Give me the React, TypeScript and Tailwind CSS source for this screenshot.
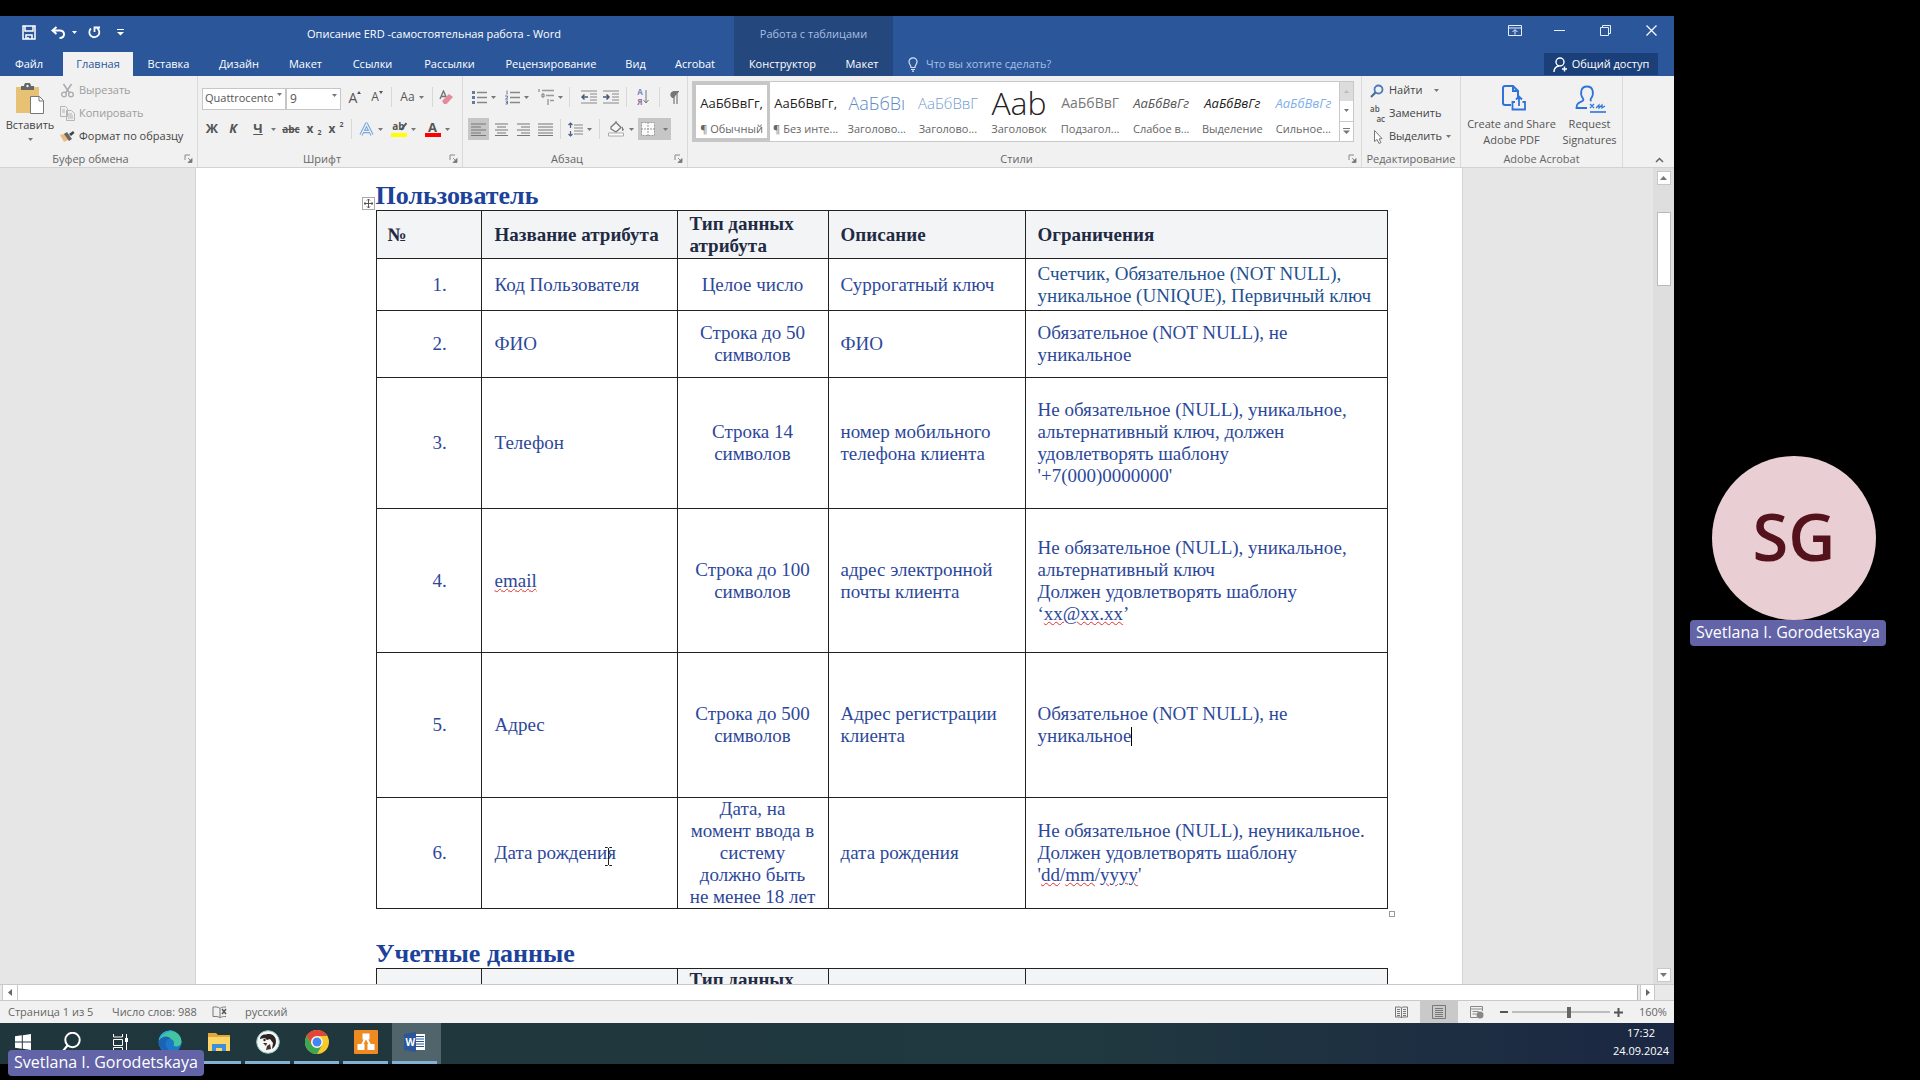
import React from "react";
import type { ReactNode } from "react";

type P = { children?: ReactNode };

function Svg({ w, h, box, className, children }: P & { w: number; h: number; box?: string; className?: string }) {
  return (
    <svg width={w} height={h} viewBox={box ?? `0 0 ${w} ${h}`} fill="none" className={"shrink-0 " + (className ?? "")} aria-hidden="true">
      {children}
    </svg>
  );
}

const Arrow = ({ className }: { className?: string }) => (
  <Svg w={5} h={3} className={className}>
    <path d="M0 0h5L2.500 3z" fill="#777" />
  </Svg>
);

const Launcher = () => (
  <Svg w={9} h={9}>
    <path d="M1 6V1h5" stroke="#888" />
    <path d="M4 4l3 3M8 4.500v4H4z" stroke="#777" fill="#777" strokeWidth=".8" />
  </Svg>
);

const Sep = () => <span className="mx-1 h-5 w-px shrink-0 bg-[#d8d8d8]" />;

function Tool({ label, className, children }: P & { label: string; className: string }) {
  return (
    <button type="button" aria-label={label} className={"flex h-[22px] shrink-0 items-center justify-center gap-1 text-[#555] " + className}>
      {children}
    </button>
  );
}

function Group({ title, className, launcher, children }: P & { title: string; className: string; launcher?: boolean }) {
  return (
    <section aria-label={title} className={"relative flex flex-col border-r border-[#dadada] " + className}>
      <div className="min-h-0 flex-1">{children}</div>
      <div className={"flex h-4 items-center justify-center text-[11px] whitespace-nowrap text-[#666]" + (launcher ? " pr-4" : "")}>{title}</div>
      {launcher && (
        <button type="button" aria-label={title + ": параметры"} className="absolute right-1 bottom-1">
          <Launcher />
        </button>
      )}
    </section>
  );
}

const tabs = [
  { t: "Файл", w: "w-[58px] mr-[5px]" },
  { t: "Главная", w: "w-[70px]" },
  { t: "Вставка", w: "w-[71px]" },
  { t: "Дизайн", w: "w-[70px]" },
  { t: "Макет", w: "w-[63px]" },
  { t: "Ссылки", w: "w-[71px]" },
  { t: "Рассылки", w: "w-[83px]" },
  { t: "Рецензирование", w: "w-[120px]" },
  { t: "Вид", w: "w-[49px]" },
  { t: "Acrobat", w: "w-[70px]" },
];

function TitleBar() {
  return (
    <header className="flex h-[60px] shrink-0 bg-[#2b579a] text-white">
      <div className="flex w-[734px] shrink-0 flex-col">
        <div className="flex h-9 items-center">
          <div className="flex w-[130px] shrink-0 items-center pb-1 pl-[22px]">
            <button type="button" aria-label="Сохранить">
              <Svg w={14} h={15}>
                <path d="M1 1h12v13H1zM3 1v5h8V1M4 14v-4h6v4M6 14v-2" stroke="#fff" strokeWidth="1.500" />
              </Svg>
            </button>
            <button type="button" aria-label="Отменить" className="ml-[15px] flex items-center gap-[7px]">
              <Svg w={14} h={13}>
                <path d="M5.500 1L1.500 4.500l4 3.500M2 4.500h6.500c6 0 6 7.500 0 7.500" stroke="#fff" strokeWidth="2" />
              </Svg>
              <Svg w={5} h={3}><path d="M0 0h5L2.500 3z" fill="#fff" /></Svg>
            </button>
            <button type="button" aria-label="Повторить" className="ml-[10px]">
              <Svg w={14} h={13}>
                <path d="M4 2.500A5 5 0 1 0 10 2M7.500 6V1.500H13" stroke="#fff" strokeWidth="1.800" />
              </Svg>
            </button>
            <button type="button" aria-label="Настройка панели" className="ml-4">
              <Svg w={7} h={7}><path d="M0 .5h7" stroke="#fff" /><path d="M0 3h7L3.500 6.500z" fill="#fff" /></Svg>
            </button>
          </div>
          <h1 className="flex-1 pl-1 text-center text-[11px] whitespace-nowrap">Описание ERD -самостоятельная работа - Word</h1>
        </div>
        <nav className="flex h-6 text-[11px]">
          {tabs.map((x, i) => (
            <button key={x.t} type="button" className={"shrink-0 text-center " + x.w + (i === 1 ? " bg-[#f1f1f1] text-[#2b579a]" : "")}>
              {x.t}
            </button>
          ))}
        </nav>
      </div>
      <div className="flex w-[159px] shrink-0 flex-col bg-[#24477e] text-[11px]">
        <div className="flex h-9 items-center justify-center text-[#a9bfe0]">Работа с таблицами</div>
        <div className="flex h-6">
          <button type="button" className="w-[97px] text-center">Конструктор</button>
          <button type="button" className="flex-1 text-center">Макет</button>
        </div>
      </div>
      <div className="flex flex-1 flex-col">
        <div className="flex h-9 items-center justify-end pr-[17px] pb-2">
          <button type="button" aria-label="Параметры ленты" className="w-[46px]">
            <Svg w={14} h={11}><path d="M.5.500h13v10H.5zM.5 3h13M7 9.500V5M4.500 7L7 4.500 9.500 7" stroke="#e6eefb" /></Svg>
          </button>
          <button type="button" aria-label="Свернуть" className="w-[46px]"><Svg w={11} h={11}><path d="M0 5.500h11" stroke="#e6eefb" /></Svg></button>
          <button type="button" aria-label="Восстановить" className="w-[46px]">
            <Svg w={11} h={11}><path d="M.5 2.500h8v8h-8zM2.500 2.500v-2h8v8h-2" stroke="#e6eefb" /></Svg>
          </button>
          <button type="button" aria-label="Закрыть"><Svg w={11} h={11}><path d="M.5.500l10 10M10.500.500l-10 10" stroke="#fff" strokeWidth="1.200" /></Svg></button>
        </div>
        <div className="flex h-6 items-center justify-between pr-4 pl-[15px] text-[11px]">
          <label className="flex items-center gap-2">
            <Svg w={10} h={15}><path d="M3 10.500C3 8 1 7.500 1 4.800a4 4 0 0 1 8 0C9 7.500 7 8 7 10.500zM3 12.500h4M4 14.200h2" stroke="#d5e2f5" strokeWidth="1.200" /></Svg>
            <input aria-label="Помощник" placeholder="Что вы хотите сделать?" className="w-40 bg-transparent placeholder:text-[#a9c0e4] outline-none" />
          </label>
          <button type="button" className="flex h-[22px] w-[114px] items-center justify-center gap-1 bg-[#1b3f78] whitespace-nowrap">
            <Svg w={15} h={15}>
              <circle cx="7" cy="5" r="4" stroke="#fff" strokeWidth="1.400" />
              <path d="M1 15c0-4 2-5.500 5-6M9 12h5M11.500 9.500v5" stroke="#fff" strokeWidth="1.400" />
            </Svg>
            Общий доступ
          </button>
        </div>
      </div>
    </header>
  );
}

function Clipboard() {
  return (
    <Group title="Буфер обмена" className="w-[198px] shrink-0" launcher>
      <div className="flex">
        <button type="button" className="flex w-[60px] shrink-0 flex-col items-center pt-[7px] text-[11px] text-[#444]">
          <Svg w={30} h={32}>
            <rect x="1" y="4" width="23" height="26" fill="#e8c274" />
            <path d="M6 7V3h3a3.500 3.500 0 0 1 7 0h3v4z" fill="#666" />
            <circle cx="12.500" cy="3" r="1.200" fill="#f1f1f1" />
            <path d="M15.500 13.500h9l4 4v13h-13z" fill="#fff" stroke="#777" />
            <path d="M24 13.500v4.500h4.500" stroke="#777" />
          </Svg>
          <span className="leading-5">Вставить</span>
          <Arrow className="mt-[3px]" />
        </button>
        <div className="flex flex-col pt-[3px] text-[11px] whitespace-nowrap">
          <button type="button" className="flex h-[23px] items-center gap-1 text-[#9d9d9d]">
            <Svg w={15} h={15}>
              <path d="M3.500 1l6 9M11.500 1l-6 9" stroke="#aaa" strokeWidth="1.500" />
              <circle cx="4" cy="11.500" r="2.300" stroke="#aaa" strokeWidth="1.300" />
              <circle cx="11" cy="11.500" r="2.300" stroke="#aaa" strokeWidth="1.300" />
            </Svg>
            Вырезать
          </button>
          <button type="button" className="flex h-[23px] items-center gap-1 text-[#9d9d9d]">
            <Svg w={15} h={15}>
              <path d="M.5.500h5l2 2v8h-7zM6.500 4.500h5l3 3v7h-8z" stroke="#b5b5b5" fill="#eee" />
              <path d="M2 4h3M2 6h3M8 8h4M8 10h5M8 12h5" stroke="#b5b5b5" />
            </Svg>
            Копировать
          </button>
          <button type="button" className="flex h-[23px] items-center gap-1 text-[#444]">
            <Svg w={15} h={14}>
              <path d="M0 5l4 7 6-3-3-6z" fill="#e9bd80" />
              <path d="M4 4l3-2 5 7-3 2z" fill="#666" />
              <path d="M9 4l4-3 1.500 2L11 6z" fill="#444" />
            </Svg>
            Формат по образцу
          </button>
        </div>
      </div>
    </Group>
  );
}

function FontGroup() {
  return (
    <Group title="Шрифт" className="w-[265px] shrink-0" launcher>
      <div className="mt-[10px] flex h-[22px] items-center pl-1">
        <div className="relative">
          <select aria-label="Шрифт" className="h-[22px] w-[84px] appearance-none border border-[#c6c6c6] bg-white pr-3 pl-[2px] text-[11px] text-[#555]">
            <option>Quattrocento</option>
          </select>
          <Arrow className="absolute top-[9px] right-1" />
        </div>
        <div className="relative">
          <select aria-label="Размер" className="h-[22px] w-[55px] appearance-none border border-[#c6c6c6] bg-white pl-[3px] text-[12px] text-[#555]">
            <option>9</option>
          </select>
          <Arrow className="absolute top-[9px] right-1" />
        </div>
        <Tool label="Увеличить" className="ml-1 w-[20px]">
          <span className="text-[14px]">A</span>
          <Svg w={4} h={3} className="-ml-1 mb-[10px]"><path d="M0 3h4L2 0z" fill="#555" /></Svg>
        </Tool>
        <Tool label="Уменьшить" className="ml-[2px] w-[20px]">
          <span className="text-[12px]">A</span>
          <Svg w={4} h={3} className="-ml-1 mb-[10px]"><path d="M0 0h4L2 3z" fill="#555" /></Svg>
        </Tool>
        <Sep />
        <Tool label="Регистр" className="w-8"><span className="text-[12px]">Aa</span><Arrow /></Tool>
        <Sep />
        <Tool label="Очистить формат" className="w-5">
          <Svg w={16} h={15}>
            <path d="M1 9L4.500 1 8 9M2.500 6.500h4" stroke="#777" strokeWidth="1.400" />
            <path d="M3 11l7-7 4 3-6.500 7H5z" fill="#e58a9b" />
          </Svg>
        </Tool>
      </div>
      <div className="mt-[10px] flex h-[22px] items-center pl-1">
        <Tool label="Полужирный" className="w-5"><b className="text-[13px]">Ж</b></Tool>
        <Tool label="Курсив" className="w-[22px]"><b className="text-[13px] italic">К</b></Tool>
        <Tool label="Подчёркнутый" className="w-[35px] gap-[8px] pl-[6px]"><b className="text-[13px] underline">Ч</b><Arrow /></Tool>
        <Tool label="Зачёркнутый" className="w-[24px]"><b className="text-[10px] line-through">abc</b></Tool>
        <Tool label="Подстрочный" className="w-[22px] gap-0"><b className="text-[12px]">x</b><b className="mt-2 text-[7px]">2</b></Tool>
        <Tool label="Надстрочный" className="w-[22px] gap-0"><b className="text-[12px]">x</b><b className="mb-2 text-[7px]">2</b></Tool>
        <Sep />
        <Tool label="Эффекты" className="w-[30px]">
          <Svg w={15} h={15}>
            <path d="M2 13L7.500 2 13 13M4.500 9.500h6" stroke="#7ea9d8" strokeWidth="3.400" strokeLinejoin="round" />
            <path d="M2 13L7.500 2 13 13M4.500 9.500h6" stroke="#eef4fb" strokeWidth="1.200" />
          </Svg>
          <Arrow />
        </Tool>
        <Tool label="Выделение цветом" className="w-[34px]">
          <span className="relative flex w-4 flex-col">
            <b className="h-[12px] text-[10px] leading-[11px]">ab</b>
            <span className="h-[4px] bg-[#ffff00]" />
            <Svg w={9} h={10} className="absolute top-[1px] right-0"><path d="M8.500 1L3 8" stroke="#555" strokeWidth="2" /></Svg>
          </span>
          <Arrow />
        </Tool>
        <Tool label="Цвет текста" className="w-[34px]">
          <span className="flex w-4 flex-col items-center">
            <b className="h-[12px] text-[13px] leading-[12px]">A</b>
            <span className="h-[4px] w-4 bg-[#ff0000]" />
          </span>
          <Arrow />
        </Tool>
      </div>
    </Group>
  );
}

const lines = (d: string) => (
  <Svg w={15} h={13}><path d={d} stroke="#777" strokeWidth="1.200" /></Svg>
);

function ParagraphGroup() {
  return (
    <Group title="Абзац" className="w-[225px] shrink-0" launcher>
      <div className="mt-[10px] flex h-[22px] items-center pl-[6px]">
        <Tool label="Маркеры" className="w-[30px]">
          <Svg w={15} h={13}><path d="M5 1.500h10M5 6.500h10M5 11.500h10" stroke="#888" strokeWidth="1.300" /><path d="M0 0h3v3H0zM0 5h3v3H0zM0 10h3v3H0z" fill="#667a99" /></Svg>
          <Arrow />
        </Tool>
        <Tool label="Нумерация" className="ml-[3px] w-[30px]">
          <Svg w={15} h={15}><path d="M5 2.500h10M5 7.500h10M5 12.500h10" stroke="#888" strokeWidth="1.300" /><path d="M2 .5v4M0 6h2.500v1.500L.5 9H3M.5 11h2v3h-2M1 12.500h1.500" stroke="#6678a0" /></Svg>
          <Arrow />
        </Tool>
        <Tool label="Многоуровневый список" className="ml-[3px] w-[30px]">
          <Svg w={16} h={16}><path d="M4 1.500h12M8 6.500h8M12 11.500h4" stroke="#999" strokeWidth="1.300" /><path d="M1 0v3M4 5h2v3H4zM10 10v6" stroke="#777" /></Svg>
          <Arrow />
        </Tool>
        <Sep />
        <Tool label="Уменьшить отступ" className="ml-1 w-[22px]">
          <Svg w={16} h={14}><path d="M0 1h16M9 4h7M9 7h7M9 10h7M0 13h16" stroke="#888" /><path d="M1 7h6M3.500 4.500L1 7l2.500 2.500" stroke="#4a5878" strokeWidth="1.500" /></Svg>
        </Tool>
        <Tool label="Увеличить отступ" className="w-[22px]">
          <Svg w={16} h={14}><path d="M0 1h16M9 4h7M9 7h7M9 10h7M0 13h16" stroke="#888" /><path d="M0 7h6M3.500 4.500L6 7 3.500 9.500" stroke="#4a5878" strokeWidth="1.500" /></Svg>
        </Tool>
        <Sep />
        <Tool label="Сортировка" className="w-6">
          <span className="flex flex-col text-[8px] leading-[10px] font-bold"><span className="text-[#7a86c4]">А</span><span className="text-[#9a6fa8]">Я</span></span>
          <Svg w={6} h={14} className="-ml-1"><path d="M3 0v13M.5 10L3 13l2.500-3" stroke="#777" /></Svg>
        </Tool>
        <Sep />
        <Tool label="Знаки" className="w-5">
          <Svg w={10} h={13}><path d="M4.500 7A3.300 3.300 0 0 1 4.500.500H10" fill="#777" stroke="#777" /><path d="M5 .5V13M8 .5V13" stroke="#777" strokeWidth="1.200" /></Svg>
        </Tool>
      </div>
      <div className="mt-[10px] flex h-[22px] items-center pl-[5px]">
        <Tool label="По левому краю" className="w-[21px] bg-[#c6c6c6]">{lines("M0 1h15M0 4h10M0 7h15M0 10h10M0 12.500h15")}</Tool>
        <Tool label="По центру" className="ml-[2px] w-[21px]">{lines("M1 1h13M3 4h9M1 7h13M3 10h9M1 12.500h13")}</Tool>
        <Tool label="По правому краю" className="w-[22px]">{lines("M1 1h13M5 4h9M1 7h13M5 10h9M1 12.500h13")}</Tool>
        <Tool label="По ширине" className="w-[22px]">{lines("M0 1h15M0 4h15M0 7h15M0 10h15M0 12.500h15")}</Tool>
        <Sep />
        <Tool label="Интервал" className="w-[30px]">
          <Svg w={15} h={15}><path d="M6 3h9M6 6h9M6 9h9M6 12h9" stroke="#888" strokeWidth="1.200" /><path d="M2.500 1v5M.5 3l2-2 2 2M2.500 9v5M.5 12l2 2 2-2" stroke="#4d6285" strokeWidth="1.200" /></Svg>
          <Arrow />
        </Tool>
        <Sep />
        <Tool label="Заливка" className="ml-[3px] w-7">
          <Svg w={17} h={16}><path d="M3 6l5-4.500 5 5-5 4.500-5-3zM8 1.500V0" stroke="#777" strokeWidth="1.300" fill="#f7f7f7" /><path d="M14 5l2 4-2 1z" fill="#777" /><path d="M.5 12h15v3H.5z" fill="#fff" stroke="#aaa" /></Svg>
          <Arrow />
        </Tool>
        <Tool label="Границы" className="ml-[3px] w-[33px] gap-2 bg-[#c6c6c6]">
          <Svg w={14} h={14}><path d="M.5.500h13v13H.5zM7 0v14M0 7h14" stroke="#999" fill="#fafafa" strokeDasharray="2 1" /></Svg>
          <Arrow />
        </Tool>
      </div>
    </Group>
  );
}

const styles = [
  { s: "АаБбВвГг,", n: "¶ Обычный", c: "text-[13px] text-[#222]", sel: true },
  { s: "АаБбВвГг,", n: "¶ Без инте...", c: "text-[13px] text-[#222]" },
  { s: "АаБбВı", n: "Заголово...", c: "text-[18px] text-[#5b8ac4] font-light" },
  { s: "АаБбВвГ", n: "Заголово...", c: "text-[15px] text-[#6f9bd1] font-light" },
  { s: "Aab", n: "Заголовок", c: "text-[32px] text-[#222] font-light" },
  { s: "АаБбВвГ", n: "Подзагол...", c: "text-[14px] text-[#777]" },
  { s: "АаБбВвГг", n: "Слабое в...", c: "text-[13px] text-[#555] italic" },
  { s: "АаБбВвГг", n: "Выделение", c: "text-[13px] text-[#222] italic font-medium" },
  { s: "АаБбВвГг", n: "Сильное...", c: "text-[13px] text-[#7fb0ea] italic" },
];

function StylesGroup() {
  return (
    <Group title="Стили" className="min-w-0 flex-1" launcher>
      <div className="mt-[5px] mr-[7px] ml-1 flex h-[61px] border border-[#c8c8c8] bg-white">
        <div className="flex min-w-0 flex-1">
          {styles.map((x, i) => (
            <button key={i} type="button" className={"flex min-w-0 flex-1 flex-col items-center overflow-hidden whitespace-nowrap " + (x.sel ? "border-[3px] border-[#c6c6c6]" : "py-[3px]")}>
              <span className={"flex h-[36px] items-center leading-none " + x.c}>{x.s}</span>
              <span className="text-[11px] leading-[16px] text-[#666]">{x.n}</span>
            </button>
          ))}
        </div>
        <div className="flex w-[14px] shrink-0 flex-col border-l border-[#c8c8c8]">
          <button type="button" aria-label="Вверх" className="flex flex-1 items-center justify-center bg-[#dcdcdc]"><Svg w={5} h={3}><path d="M0 3h5L2.500 0z" fill="#bbb" /></Svg></button>
          <button type="button" aria-label="Вниз" className="flex flex-1 items-center justify-center border-b border-[#c8c8c8]"><Arrow /></button>
          <button type="button" aria-label="Ещё" className="flex flex-1 items-center justify-center"><Svg w={7} h={6}><path d="M0 .5h7" stroke="#777" /><path d="M0 2.500h7L3.500 6z" fill="#777" /></Svg></button>
        </div>
      </div>
    </Group>
  );
}

function Ribbon() {
  return (
    <div className="flex h-[92px] shrink-0 border-b border-[#d2d2d2] bg-[#f1f1f1]">
      <Clipboard />
      <FontGroup />
      <ParagraphGroup />
      <StylesGroup />
      <Group title="Редактирование" className="w-[99px] shrink-0">
        <div className="flex flex-col pt-[3px] pl-2 text-[11px] whitespace-nowrap text-[#444]">
          <button type="button" className="flex h-[23px] items-center gap-1">
            <Svg w={15} h={14}><circle cx="8.500" cy="5.500" r="4" stroke="#4a7ab8" strokeWidth="1.800" /><path d="M5.500 8.500L1 13" stroke="#4a6a95" strokeWidth="2.200" /></Svg>
            Найти <Arrow className="ml-2" />
          </button>
          <button type="button" className="flex h-[23px] items-center gap-1">
            <span className="flex w-[15px] flex-col text-[8px] leading-[10px] font-semibold text-[#555]"><span className="text-left">ab</span><span className="text-right">ac</span></span>
            Заменить
          </button>
          <button type="button" className="flex h-[23px] items-center gap-1">
            <Svg w={15} h={14}><path d="M4.500.500v11l2.500-2 2 4 2-1-2-3.500 3-.5z" stroke="#777" fill="#fff" /></Svg>
            Выделить <Arrow />
          </button>
        </div>
      </Group>
      <Group title="Adobe Acrobat" className="w-[162px] shrink-0">
        <div className="flex justify-center gap-1 pt-[9px] text-center text-[11px] leading-4 text-[#555]">
          <button type="button" className="flex w-[92px] flex-col items-center whitespace-nowrap">
            <Svg w={24} h={26} className="mb-[5px] ml-1">
              <path d="M9 20H3a2 2 0 0 1-2-2V3a2 2 0 0 1 2-2h8l5 5v6M11 1v5h5" stroke="#2f73d9" strokeWidth="2" />
              <path d="M13 17h-2.500v7.500H23V17h-2.500M17 21v-9M14 14.500l3-3 3 3" stroke="#2f73d9" strokeWidth="1.800" />
            </Svg>
            <span>Create and Share</span><span>Adobe PDF</span>
          </button>
          <button type="button" className="flex w-[56px] flex-col items-center">
            <Svg w={32} h={28} className="mb-[3px] ml-[2px]">
              <path d="M12 23H1.500c0-5 3-5.500 6-7 1-.5 1-1.500.500-2.500C5 10 5 1.500 12 1.500s7 8.500 4 12c-.8 1-.5 2 .5 2.500" stroke="#2f73d9" strokeWidth="1.800" />
              <path d="M15 27h16" stroke="#2f73d9" strokeWidth="1.600" />
              <path d="M15 19l4 4M19 19l-4 4M21 23l3-3v3l3-3v3l3-2" stroke="#2f73d9" strokeWidth="1.200" />
            </Svg>
            <span>Request</span><span>Signatures</span>
          </button>
        </div>
      </Group>
      <div className="flex w-[51px] shrink-0 items-end justify-end pr-[10px] pb-1">
        <button type="button" aria-label="Свернуть ленту"><Svg w={9} h={6}><path d="M1 5l3.500-3.500L8 5" stroke="#666" strokeWidth="1.500" /></Svg></button>
      </div>
    </div>
  );
}

const Sp = ({ children }: P) => <span className="underline decoration-[#e02f2f] decoration-wavy decoration-1 underline-offset-1">{children}</span>;
const Br = () => <br />;

const rows: { h: string; name: ReactNode; type: ReactNode; desc: ReactNode; lim: ReactNode }[] = [
  { h: "h-[52px]", name: "Код Пользователя", type: "Целое число", desc: "Суррогатный ключ", lim: <span className="text-[#1f5290]">Счетчик, Обязательное (NOT NULL),<Br />уникальное (UNIQUE), Первичный ключ</span> },
  { h: "h-[67px]", name: "ФИО", type: <>Строка до 50<Br />символов</>, desc: "ФИО", lim: <>Обязательное (NOT NULL), не<Br />уникальное</> },
  { h: "h-[131px]", name: "Телефон", type: <>Строка 14<Br />символов</>, desc: <>номер мобильного<Br />телефона клиента</>, lim: <>Не обязательное (NULL), уникальное,<Br />альтернативный ключ, должен<Br />удовлетворять шаблону<Br />'+7(000)0000000'</> },
  { h: "h-[144px]", name: <Sp>email</Sp>, type: <>Строка до 100<Br />символов</>, desc: <>адрес электронной<Br />почты клиента</>, lim: <>Не обязательное (NULL), уникальное,<Br />альтернативный ключ<Br />Должен удовлетворять шаблону<Br />‘<Sp>xx@xx.xx</Sp>’</> },
  { h: "h-[145px]", name: "Адрес", type: <>Строка до 500<Br />символов</>, desc: <>Адрес регистрации<Br />клиента</>, lim: <>Обязательное (NOT NULL), не<Br />уникальное<span className="inline-block h-[19px] w-px bg-black align-[-4px]" /></> },
  { h: "h-[110px]", name: "Дата рождения", type: <>Дата, на<Br />момент ввода в<Br />систему<Br />должно быть<Br />не менее 18 лет</>, desc: "дата рождения", lim: <>Не обязательное (NULL), неуникальное.<Br />Должен удовлетворять шаблону<Br />'<Sp>dd</Sp>/<Sp>mm</Sp>/<Sp>yyyy</Sp>'</> },
];

const cell = "border border-[#222] py-0 whitespace-nowrap";

const Columns = () => (
  <colgroup>
    <col className="w-[105px]" /><col className="w-[196px]" /><col className="w-[151px]" /><col className="w-[197px]" /><col />
  </colgroup>
);

function Doc() {
  return (
    <div className="flex min-h-0 flex-1 bg-[#e6e6e6]">
      <main className="flex min-w-0 flex-1 justify-center overflow-hidden pl-1">
        <article className="w-[1268px] shrink-0 border-x border-[#d4d4d4] bg-white pt-3 pr-[74px] pl-[180px] font-['Liberation_Serif',serif] text-[19px] leading-[22px] text-[#2d489a]">
          <h2 className="h-[30px] text-[26px] leading-[32px] font-bold text-[#1c429a]">Пользователь</h2>
          <div className="relative">
            <span className="absolute -top-[13px] -left-[14px] flex size-[13px] items-center justify-center border border-[#aaa] bg-white">
              <Svg w={9} h={9}><path d="M4.500 0v9M0 4.500h9M3 1.500L4.500 0 6 1.500M3 7.500L4.500 9 6 7.500M1.500 3L0 4.500 1.500 6M7.500 3L9 4.500 7.500 6" stroke="#555" /></Svg>
            </span>
            <table className="w-full table-fixed border-collapse">
              <Columns />
              <thead>
                <tr className="h-[48px] bg-[#f3f4f5] text-left text-[#1f2a44]">
                  <th scope="col" className={cell + " pl-[11px]"}>№</th>
                  <th scope="col" className={cell + " pl-[13px]"}>Название атрибута</th>
                  <th scope="col" className={cell + " pl-[12px]"}>Тип данных<Br />атрибута</th>
                  <th scope="col" className={cell + " pl-[12px]"}>Описание</th>
                  <th scope="col" className={cell + " pl-[12px]"}>Ограничения</th>
                </tr>
              </thead>
              <tbody>
                {rows.map((r, i) => (
                  <tr key={i} className={r.h}>
                    <td className={cell + " pl-[56px]"}>{i + 1}.</td>
                    <td className={cell + " pl-[13px]"}>{r.name}</td>
                    <td className={cell + " text-center"}>{r.type}</td>
                    <td className={cell + " pl-[12px]"}>{r.desc}</td>
                    <td className={cell + " pl-[12px]"}>{r.lim}</td>
                  </tr>
                ))}
              </tbody>
            </table>
            <span className="absolute -right-[7px] -bottom-[8px] size-[6px] border border-[#999] bg-white" />
            <Svg w={7} h={19} className="absolute bottom-[43px] left-[229px]"><path d="M0 .5h2.500l1 1 1-1H7M3.500 1v17M0 18.500h2.500l1-1 1 1H7" stroke="#222" /></Svg>
          </div>
          <h2 className="mt-[29px] h-[30px] text-[26px] leading-[32px] font-bold text-[#1c429a]">Учетные данные</h2>
          <table className="w-full table-fixed border-collapse">
            <Columns />
            <thead>
              <tr className="h-[48px] bg-[#f3f4f5] text-left align-top text-[#1f2a44]">
                <th className={cell} /><th className={cell} />
                <th scope="col" className={cell + " pl-[12px]"}>Тип данных</th>
                <th className={cell} /><th className={cell} />
              </tr>
            </thead>
          </table>
        </article>
      </main>
      <div className="flex w-[21px] shrink-0 flex-col items-center bg-[#dedede]">
        <button type="button" aria-label="Прокрутить вверх" className="mt-[3px] flex h-[14px] w-[14px] shrink-0 items-center justify-center border border-[#c8c8c8] bg-white"><Svg w={7} h={4}><path d="M0 4h7L3.500 0z" fill="#777" /></Svg></button>
        <div className="mt-[27px] h-[74px] w-[14px] shrink-0 border border-[#bbb] bg-white" />
        <button type="button" aria-label="Прокрутить вниз" className="mt-auto mb-[2px] flex h-[14px] w-[14px] shrink-0 items-center justify-center border border-[#c8c8c8] bg-white"><Svg w={7} h={4}><path d="M0 0h7L3.500 4z" fill="#777" /></Svg></button>
      </div>
    </div>
  );
}

function StatusBar() {
  return (
    <>
      <div className="flex h-[17px] shrink-0 items-stretch border-y border-[#c9c9c9] bg-[#e9e9e9] pr-[19px] pl-[2px]">
        <button type="button" aria-label="Прокрутить влево" className="flex w-4 items-center justify-center border-x border-[#c8c8c8] bg-white"><Svg w={4} h={7}><path d="M4 0v7L0 3.500z" fill="#666" /></Svg></button>
        <div className="flex-1 border-r border-[#b5b5b5] bg-white" />
        <button type="button" aria-label="Прокрутить вправо" className="ml-[2px] flex w-[15px] items-center justify-center border-x border-[#c8c8c8] bg-white"><Svg w={4} h={7}><path d="M0 0v7l4-3.500z" fill="#666" /></Svg></button>
      </div>
      <footer className="flex h-[22px] shrink-0 items-center bg-[#f1f1f1] pr-2 pl-2 text-[11px] whitespace-nowrap text-[#666]">
        <span className="w-[104px]">Страница 1 из 5</span>
        <span className="w-[100px]">Число слов: 988</span>
        <button type="button" aria-label="Правописание" className="w-[33px]">
          <Svg w={15} h={13}><path d="M8 2.500C6 .5 3 1 1 1v9.500c3 0 5-.5 7 1.500M8 2.500V12M8 12c1-1 2-1.500 6-1.500M8 2.500C9 1.500 10 1 14 1" stroke="#777" /><path d="M10 3l4 5M14 3l-4 5" stroke="#555" strokeWidth="1.500" /></Svg>
        </button>
        <span className="flex-1">русский</span>
        <button type="button" aria-label="Режим чтения" className="flex h-full w-[38px] items-center justify-center">
          <Svg w={13} h={13}><path d="M6.500 2v10M.5 1h5l1 1 1-1h5v10h-5l-1 1-1-1h-5zM2 3.500h3M2 5.500h3M2 7.500h3M2 9.500h3M8 3.500h3M8 5.500h3M8 7.500h3M8 9.500h3" stroke="#777" /></Svg>
        </button>
        <button type="button" aria-label="Разметка страницы" className="flex h-full w-[38px] items-center justify-center bg-[#c9c9c9]">
          <Svg w={14} h={14}><path d="M.5.500h13v13H.5zM3 3.500h8M3 5.500h8M3 7.500h8M3 9.500h8M3 11.500h8" stroke="#777" /></Svg>
        </button>
        <button type="button" aria-label="Веб-документ" className="flex h-full w-[38px] items-center justify-center">
          <Svg w={14} h={13}><path d="M12.500 5V.500H.5v11H7M0 3h12M2.500 5.500h6M2.500 8h4" stroke="#888" /><circle cx="10" cy="9" r="3.500" fill="#888" /></Svg>
        </button>
        <button type="button" aria-label="Уменьшить масштаб" className="ml-1"><Svg w={8} h={8}><path d="M0 4h8" stroke="#555" strokeWidth="2" /></Svg></button>
        <input type="range" aria-label="Масштаб" min={0} max={100} defaultValue={59} className="mx-[4px] h-[2px] w-[98px] appearance-none bg-[#bdbdbd] [&::-webkit-slider-thumb]:h-[11px] [&::-webkit-slider-thumb]:w-[4px] [&::-webkit-slider-thumb]:appearance-none [&::-webkit-slider-thumb]:bg-[#666]" />
        <button type="button" aria-label="Увеличить масштаб"><Svg w={9} h={9}><path d="M0 4.500h9M4.500 0v9" stroke="#555" strokeWidth="2" /></Svg></button>
        <span className="ml-4 w-[27px] text-right">160%</span>
      </footer>
    </>
  );
}

function TaskBtn({ label, open, active, children }: P & { label: string; open?: boolean; active?: boolean }) {
  return (
    <button type="button" aria-label={label} className={"relative flex h-full w-[49px] items-center justify-center pr-1 pb-1 " + (active ? "bg-[#50646b]" : "")}>
      {children}
      {open && <span className="absolute right-1 bottom-0 left-0 h-[3px] bg-[#84b0d6]" />}
    </button>
  );
}

function TaskBar() {
  return (
    <div className="flex h-[41px] shrink-0 items-center bg-linear-to-r from-[#20363d] via-[#20383f] via-65% to-[#1b2743]">
      <TaskBtn label="Пуск"><Svg w={16} h={16}><path d="M0 2.300L6.800 1.300v6.200H0zM7.800 1.200L16 0v7.500H7.800zM0 8.500h6.800v6.200L0 13.700zM7.800 8.500H16V16l-8.200-1.200z" fill="#fff" /></Svg></TaskBtn>
      <TaskBtn label="Поиск"><Svg w={20} h={20}><circle cx="10.500" cy="8" r="7.200" stroke="#fff" strokeWidth="2" /><path d="M5.500 13.500L1 19" stroke="#fff" strokeWidth="2" /></Svg></TaskBtn>
      <TaskBtn label="Представление задач"><Svg w={16} h={16}><path d="M.5 0v3h9V0M.5 5.500h9v6h-9zM.5 16v-2.500h9V16M13.500 0v16" stroke="#fff" /><path d="M12 4h3v4h-3z" fill="#fff" /></Svg></TaskBtn>
      <TaskBtn label="Edge">
        <Svg w={24} h={24}>
          <circle cx="12" cy="12" r="11.500" fill="#1c78c8" />
          <path d="M.7 10A11.500 11.500 0 0 1 23.500 12c0 4-5 5.500-8 3.500 1.500-3 0-6.500-4-6.500C6 9 2 11 .7 10z" fill="#43c6a0" />
          <path d="M.7 11C3 5.500 11 5 13 9c-5-1-7 5-4 9s6 4 9 3A11.500 11.500 0 0 1 .7 11z" fill="#1b63b5" />
          <path d="M1 9C3 2 10-.5 15 1c-5 0-10 3-14 8z" fill="#2aa5d8" />
        </Svg>
      </TaskBtn>
      <TaskBtn label="Проводник" open>
        <Svg w={22} h={18}><path d="M0 0h8l2 2h12v16H0z" fill="#e0a93a" /><path d="M0 4h22v14H0z" fill="#fbd566" /><path d="M4 18v-7h14v7h-4v-3H8v3z" fill="#3f8fd8" /></Svg>
      </TaskBtn>
      <TaskBtn label="DBeaver" open>
        <Svg w={24} h={24}>
          <circle cx="12" cy="12" r="11.300" fill="#f5f7f6" stroke="#8cc8bd" />
          <path d="M4 9c0-3 3-5 6-4.500 5-1.500 10 1 10 7 0 3-1.500 6-4 7.500l1-6-3-4-3 1-2-2-3 .5z" fill="#2d2523" />
          <circle cx="8.500" cy="10" r="1.200" fill="#222" />
          <path d="M7 13l4 0-1 3z" fill="#3b2a27" />
          <path d="M10 20l1-4 3-2 1 5z" fill="#4a302c" />
        </Svg>
      </TaskBtn>
      <TaskBtn label="Chrome" open>
        <Svg w={24} h={24}>
          <circle cx="12" cy="12" r="12" fill="#f6c92c" />
          <path d="M1.600 6a12 12 0 0 1 20.800 0H12a6 6 0 0 0-5.200 9z" fill="#e2453a" />
          <path d="M1.600 6A12 12 0 0 0 12 24l5.200-9A6 6 0 0 1 6.800 15z" fill="#3aa757" />
          <circle cx="12" cy="12" r="5.800" fill="#fff" /><circle cx="12" cy="12" r="4.500" fill="#4285f4" />
        </Svg>
      </TaskBtn>
      <TaskBtn label="draw.io" open>
        <Svg w={24} h={24}><rect width="24" height="24" rx="1" fill="#ee8a1f" /><path d="M12 7l-5 10M12 7l5 10" stroke="#fff" strokeWidth="2" /><path d="M8.500 3.500h7v6h-7zM3.500 14h7v6h-7zM13.500 14h7v6h-7z" fill="#fff" /></Svg>
      </TaskBtn>
      <TaskBtn label="Word" open active>
        <Svg w={22} h={20}>
          <path d="M10 2h11v16H10z" fill="#fff" /><path d="M12 4.500h8M12 7h8M12 9.500h8M12 12h8M12 14.500h8" stroke="#2b579a" /><path d="M0 2l12-2v20L0 18z" fill="#2b579a" />
          <text x="1.500" y="14" fontSize="10" fontWeight="700" fill="#fff" fontFamily="Open Sans, sans-serif">W</text>
        </Svg>
      </TaskBtn>
      <div className="ml-auto flex w-[66px] flex-col items-center pb-1 text-[11px] leading-[18px] text-white">
        <span>17:32</span><span>24.09.2024</span>
      </div>
    </div>
  );
}

const tag = "flex h-[26px] w-[196px] items-center justify-center rounded-[4px] bg-[#6264a7] pb-[2px] text-[16px] whitespace-nowrap text-white";

export default function App() {
  return (
    <div className="relative flex h-screen overflow-hidden bg-black font-['Open_Sans','Noto_Sans',sans-serif]">
      <div className="flex min-w-0 flex-1 flex-col py-4">
        <TitleBar />
        <Ribbon />
        <Doc />
        <StatusBar />
        <TaskBar />
      </div>
      <aside className="flex w-[246px] shrink-0 flex-col justify-center pt-[22px] pl-4">
        <div className="ml-[22px] flex size-[164px] items-center justify-center rounded-full bg-[#e9cfd3] pb-1 text-[65px] leading-none font-semibold text-[#54121c]">SG</div>
        <div className={tag}>Svetlana I. Gorodetskaya</div>
      </aside>
      <div className={"absolute bottom-1 left-2 " + tag}>Svetlana I. Gorodetskaya</div>
    </div>
  );
}
